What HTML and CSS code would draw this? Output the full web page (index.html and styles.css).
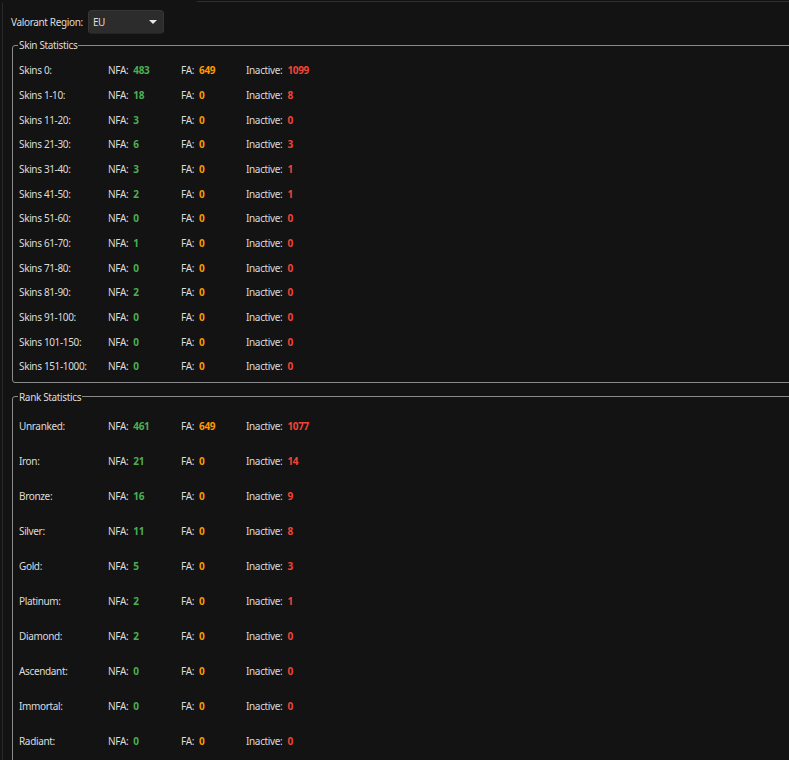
FILE: index.html
```html
<!DOCTYPE html>
<html>
<head>
<meta charset="utf-8">
<link rel="stylesheet" href="styles.css">
</head>
<body>
<div class="topline"><div class="topline-fill"></div></div>
<div class="frame">
  <div class="region">
    <span class="region-label">Valorant Region:</span>
    <div class="combo"><span class="combo-text">EU</span><span class="combo-arrow"></span></div>
  </div>

  <fieldset class="group skins">
    <legend>Skin Statistics</legend>
    <div class="row"><span class="name">Skins 0:</span><span class="c1"><span class="k">NFA:</span><b class="g">483</b></span><span class="c2"><span class="k">FA:</span><b class="o">649</b></span><span class="c3"><span class="k">Inactive:</span><b class="r">1099</b></span></div>
    <div class="row"><span class="name">Skins 1-10:</span><span class="c1"><span class="k">NFA:</span><b class="g">18</b></span><span class="c2"><span class="k">FA:</span><b class="o">0</b></span><span class="c3"><span class="k">Inactive:</span><b class="r">8</b></span></div>
    <div class="row"><span class="name">Skins 11-20:</span><span class="c1"><span class="k">NFA:</span><b class="g">3</b></span><span class="c2"><span class="k">FA:</span><b class="o">0</b></span><span class="c3"><span class="k">Inactive:</span><b class="r">0</b></span></div>
    <div class="row"><span class="name">Skins 21-30:</span><span class="c1"><span class="k">NFA:</span><b class="g">6</b></span><span class="c2"><span class="k">FA:</span><b class="o">0</b></span><span class="c3"><span class="k">Inactive:</span><b class="r">3</b></span></div>
    <div class="row"><span class="name">Skins 31-40:</span><span class="c1"><span class="k">NFA:</span><b class="g">3</b></span><span class="c2"><span class="k">FA:</span><b class="o">0</b></span><span class="c3"><span class="k">Inactive:</span><b class="r">1</b></span></div>
    <div class="row"><span class="name">Skins 41-50:</span><span class="c1"><span class="k">NFA:</span><b class="g">2</b></span><span class="c2"><span class="k">FA:</span><b class="o">0</b></span><span class="c3"><span class="k">Inactive:</span><b class="r">1</b></span></div>
    <div class="row"><span class="name">Skins 51-60:</span><span class="c1"><span class="k">NFA:</span><b class="g">0</b></span><span class="c2"><span class="k">FA:</span><b class="o">0</b></span><span class="c3"><span class="k">Inactive:</span><b class="r">0</b></span></div>
    <div class="row"><span class="name">Skins 61-70:</span><span class="c1"><span class="k">NFA:</span><b class="g">1</b></span><span class="c2"><span class="k">FA:</span><b class="o">0</b></span><span class="c3"><span class="k">Inactive:</span><b class="r">0</b></span></div>
    <div class="row"><span class="name">Skins 71-80:</span><span class="c1"><span class="k">NFA:</span><b class="g">0</b></span><span class="c2"><span class="k">FA:</span><b class="o">0</b></span><span class="c3"><span class="k">Inactive:</span><b class="r">0</b></span></div>
    <div class="row"><span class="name">Skins 81-90:</span><span class="c1"><span class="k">NFA:</span><b class="g">2</b></span><span class="c2"><span class="k">FA:</span><b class="o">0</b></span><span class="c3"><span class="k">Inactive:</span><b class="r">0</b></span></div>
    <div class="row"><span class="name">Skins 91-100:</span><span class="c1"><span class="k">NFA:</span><b class="g">0</b></span><span class="c2"><span class="k">FA:</span><b class="o">0</b></span><span class="c3"><span class="k">Inactive:</span><b class="r">0</b></span></div>
    <div class="row"><span class="name">Skins 101-150:</span><span class="c1"><span class="k">NFA:</span><b class="g">0</b></span><span class="c2"><span class="k">FA:</span><b class="o">0</b></span><span class="c3"><span class="k">Inactive:</span><b class="r">0</b></span></div>
    <div class="row"><span class="name">Skins 151-1000:</span><span class="c1"><span class="k">NFA:</span><b class="g">0</b></span><span class="c2"><span class="k">FA:</span><b class="o">0</b></span><span class="c3"><span class="k">Inactive:</span><b class="r">0</b></span></div>
  </fieldset>

  <fieldset class="group ranks">
    <legend>Rank Statistics</legend>
    <div class="row"><span class="name">Unranked:</span><span class="c1"><span class="k">NFA:</span><b class="g">461</b></span><span class="c2"><span class="k">FA:</span><b class="o">649</b></span><span class="c3"><span class="k">Inactive:</span><b class="r">1077</b></span></div>
    <div class="row"><span class="name">Iron:</span><span class="c1"><span class="k">NFA:</span><b class="g">21</b></span><span class="c2"><span class="k">FA:</span><b class="o">0</b></span><span class="c3"><span class="k">Inactive:</span><b class="r">14</b></span></div>
    <div class="row"><span class="name">Bronze:</span><span class="c1"><span class="k">NFA:</span><b class="g">16</b></span><span class="c2"><span class="k">FA:</span><b class="o">0</b></span><span class="c3"><span class="k">Inactive:</span><b class="r">9</b></span></div>
    <div class="row"><span class="name">Silver:</span><span class="c1"><span class="k">NFA:</span><b class="g">11</b></span><span class="c2"><span class="k">FA:</span><b class="o">0</b></span><span class="c3"><span class="k">Inactive:</span><b class="r">8</b></span></div>
    <div class="row"><span class="name">Gold:</span><span class="c1"><span class="k">NFA:</span><b class="g">5</b></span><span class="c2"><span class="k">FA:</span><b class="o">0</b></span><span class="c3"><span class="k">Inactive:</span><b class="r">3</b></span></div>
    <div class="row"><span class="name">Platinum:</span><span class="c1"><span class="k">NFA:</span><b class="g">2</b></span><span class="c2"><span class="k">FA:</span><b class="o">0</b></span><span class="c3"><span class="k">Inactive:</span><b class="r">1</b></span></div>
    <div class="row"><span class="name">Diamond:</span><span class="c1"><span class="k">NFA:</span><b class="g">2</b></span><span class="c2"><span class="k">FA:</span><b class="o">0</b></span><span class="c3"><span class="k">Inactive:</span><b class="r">0</b></span></div>
    <div class="row"><span class="name">Ascendant:</span><span class="c1"><span class="k">NFA:</span><b class="g">0</b></span><span class="c2"><span class="k">FA:</span><b class="o">0</b></span><span class="c3"><span class="k">Inactive:</span><b class="r">0</b></span></div>
    <div class="row"><span class="name">Immortal:</span><span class="c1"><span class="k">NFA:</span><b class="g">0</b></span><span class="c2"><span class="k">FA:</span><b class="o">0</b></span><span class="c3"><span class="k">Inactive:</span><b class="r">0</b></span></div>
    <div class="row"><span class="name">Radiant:</span><span class="c1"><span class="k">NFA:</span><b class="g">0</b></span><span class="c2"><span class="k">FA:</span><b class="o">0</b></span><span class="c3"><span class="k">Inactive:</span><b class="r">0</b></span></div>
  </fieldset>
</div>
</body>
</html>
```
FILE: styles.css
```css
html, body {
  margin: 0;
  padding: 0;
  background: #131313;
  overflow: hidden;
  height: 760px;
}
body {
  font-family: "Noto Sans", "Open Sans", sans-serif;
  font-size: 10px;
  letter-spacing: -0.35px;
  color: #dcdcdc;
}
.topline {
  height: 2px;
  padding-left: 197px;
}
.topline-fill {
  height: 1px;
  margin-top: 1px;
  background: #2e2e2e;
}
.frame {
  margin-left: 2px;
  border-left: 1px solid #2a2a2a;
  height: 758px;
}
.region {
  display: flex;
  align-items: center;
  padding: 7px 0 0 8px;
  height: 24px;
}
.region-label {
  margin-right: 5px;
}
.combo {
  width: 76px;
  height: 24px;
  box-sizing: border-box;
  background: #2c2c2c;
  border: 1px solid #363636;
  border-bottom-color: #242424;
  border-radius: 4px;
  display: flex;
  align-items: center;
  justify-content: space-between;
  padding: 0 5px 0 4px;
}
.combo-arrow {
  width: 0;
  height: 0;
  border-left: 4px solid transparent;
  border-right: 4px solid transparent;
  border-top: 4px solid #e8e8e8;
  margin-right: 1px;
}
.group {
  border: 1px solid #8a8a8a;
  border-radius: 3px;
  margin: 0 -30px 0 9px;
  padding: 0 0 0 6px;
  min-width: 0;
}
.group legend {
  padding: 0 1px;
  margin-left: -1px;
  line-height: 12px;
  color: #dcdcdc;
}
.skins {
  margin-top: 5px;
  padding-top: 7px;
  padding-bottom: 3px;
}
.ranks {
  margin-top: 8px;
  padding-top: 6px;
  padding-bottom: 20px;
}
.row {
  display: flex;
  align-items: center;
}
.skins .row { height: 24.67px; }
.ranks .row { height: 35px; }
.name { width: 89px; }
.c1 { width: 73px; }
.c2 { width: 65px; }
.k { margin-right: 5px; }
b { font-weight: 700; }
.g { color: #4caf50; }
.o { color: #ff9800; }
.r { color: #f44336; }
```
